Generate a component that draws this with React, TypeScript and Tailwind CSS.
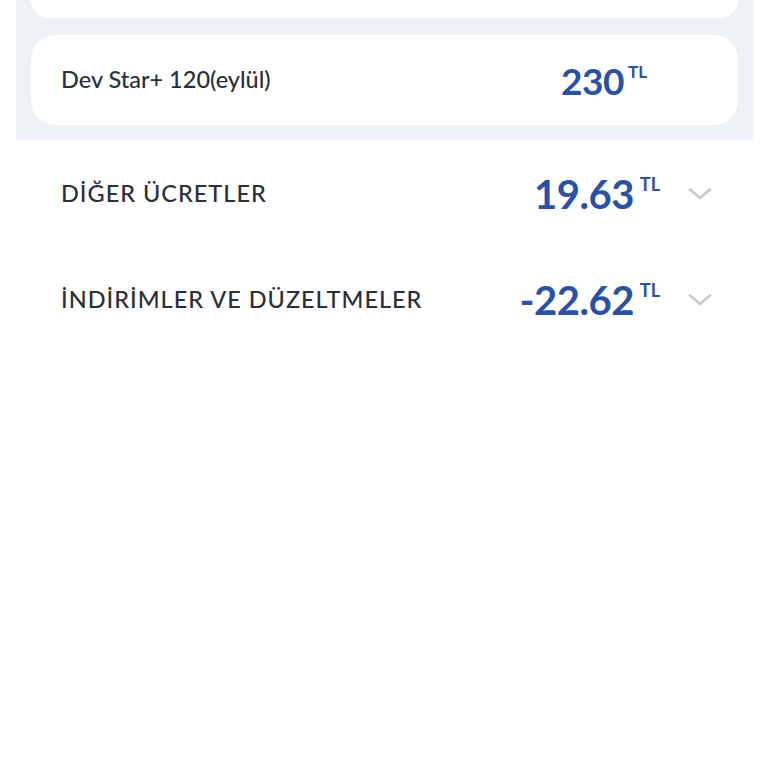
import React from "react";

const font = { fontFamily: '"Lato", "Noto Sans", sans-serif' };

function Chevron() {
  return (
    <svg width="24" height="12" viewBox="0 0 24 12" fill="none">
      <path d="M2 1.5 L12 10 L22 1.5" stroke="#c8c8cb" strokeWidth="2.6" strokeLinecap="round" strokeLinejoin="round" />
    </svg>
  );
}

function Amount({ value, big }: { value: string; big?: boolean }) {
  return (
    <div className="flex items-start text-[#2851a7]">
      <span className={big ? "text-[40px] font-bold leading-none tracking-[-0.5px]" : "text-[37px] font-bold leading-none tracking-[-0.5px]"}>
        {value}
      </span>
      <span className={big ? "ml-[6px] mt-[1px] text-[18px] font-bold leading-none" : "ml-[4px] mt-[1px] text-[17px] font-bold leading-none"}>
        TL
      </span>
    </div>
  );
}

function SummaryRow({ label, value }: { label: string; value: string }) {
  return (
    <div className="flex h-[106px] items-center pl-[61px] pr-[56px]">
      <span className="flex-1 text-[23.5px] font-medium tracking-[1px] text-[#2b2f3a]">{label}</span>
      <Amount value={value} big />
      <div className="ml-[28px] flex items-center">
        <Chevron />
      </div>
    </div>
  );
}

export default function App() {
  return (
    <div className="h-[768px] w-[768px] overflow-hidden bg-white" style={font}>
      <div className="ml-[16px] w-[737px] bg-[#eef1f5] px-[15px] pb-[15px]">
        <div className="h-[18px] rounded-b-[24px] bg-white" />
        <div className="mt-[17px] flex h-[90px] items-center rounded-[24px] bg-white pl-[30px] pr-[91px]">
          <span className="flex-1 text-[23.5px] font-medium text-[#2b2f3a]">Dev Star+ 120(eylül)</span>
          <Amount value="230" />
        </div>
      </div>
      <div className="pt-[1px]">
        <SummaryRow label="DİĞER ÜCRETLER" value="19.63" />
        <SummaryRow label="İNDİRİMLER VE DÜZELTMELER" value="-22.62" />
      </div>
    </div>
  );
}
